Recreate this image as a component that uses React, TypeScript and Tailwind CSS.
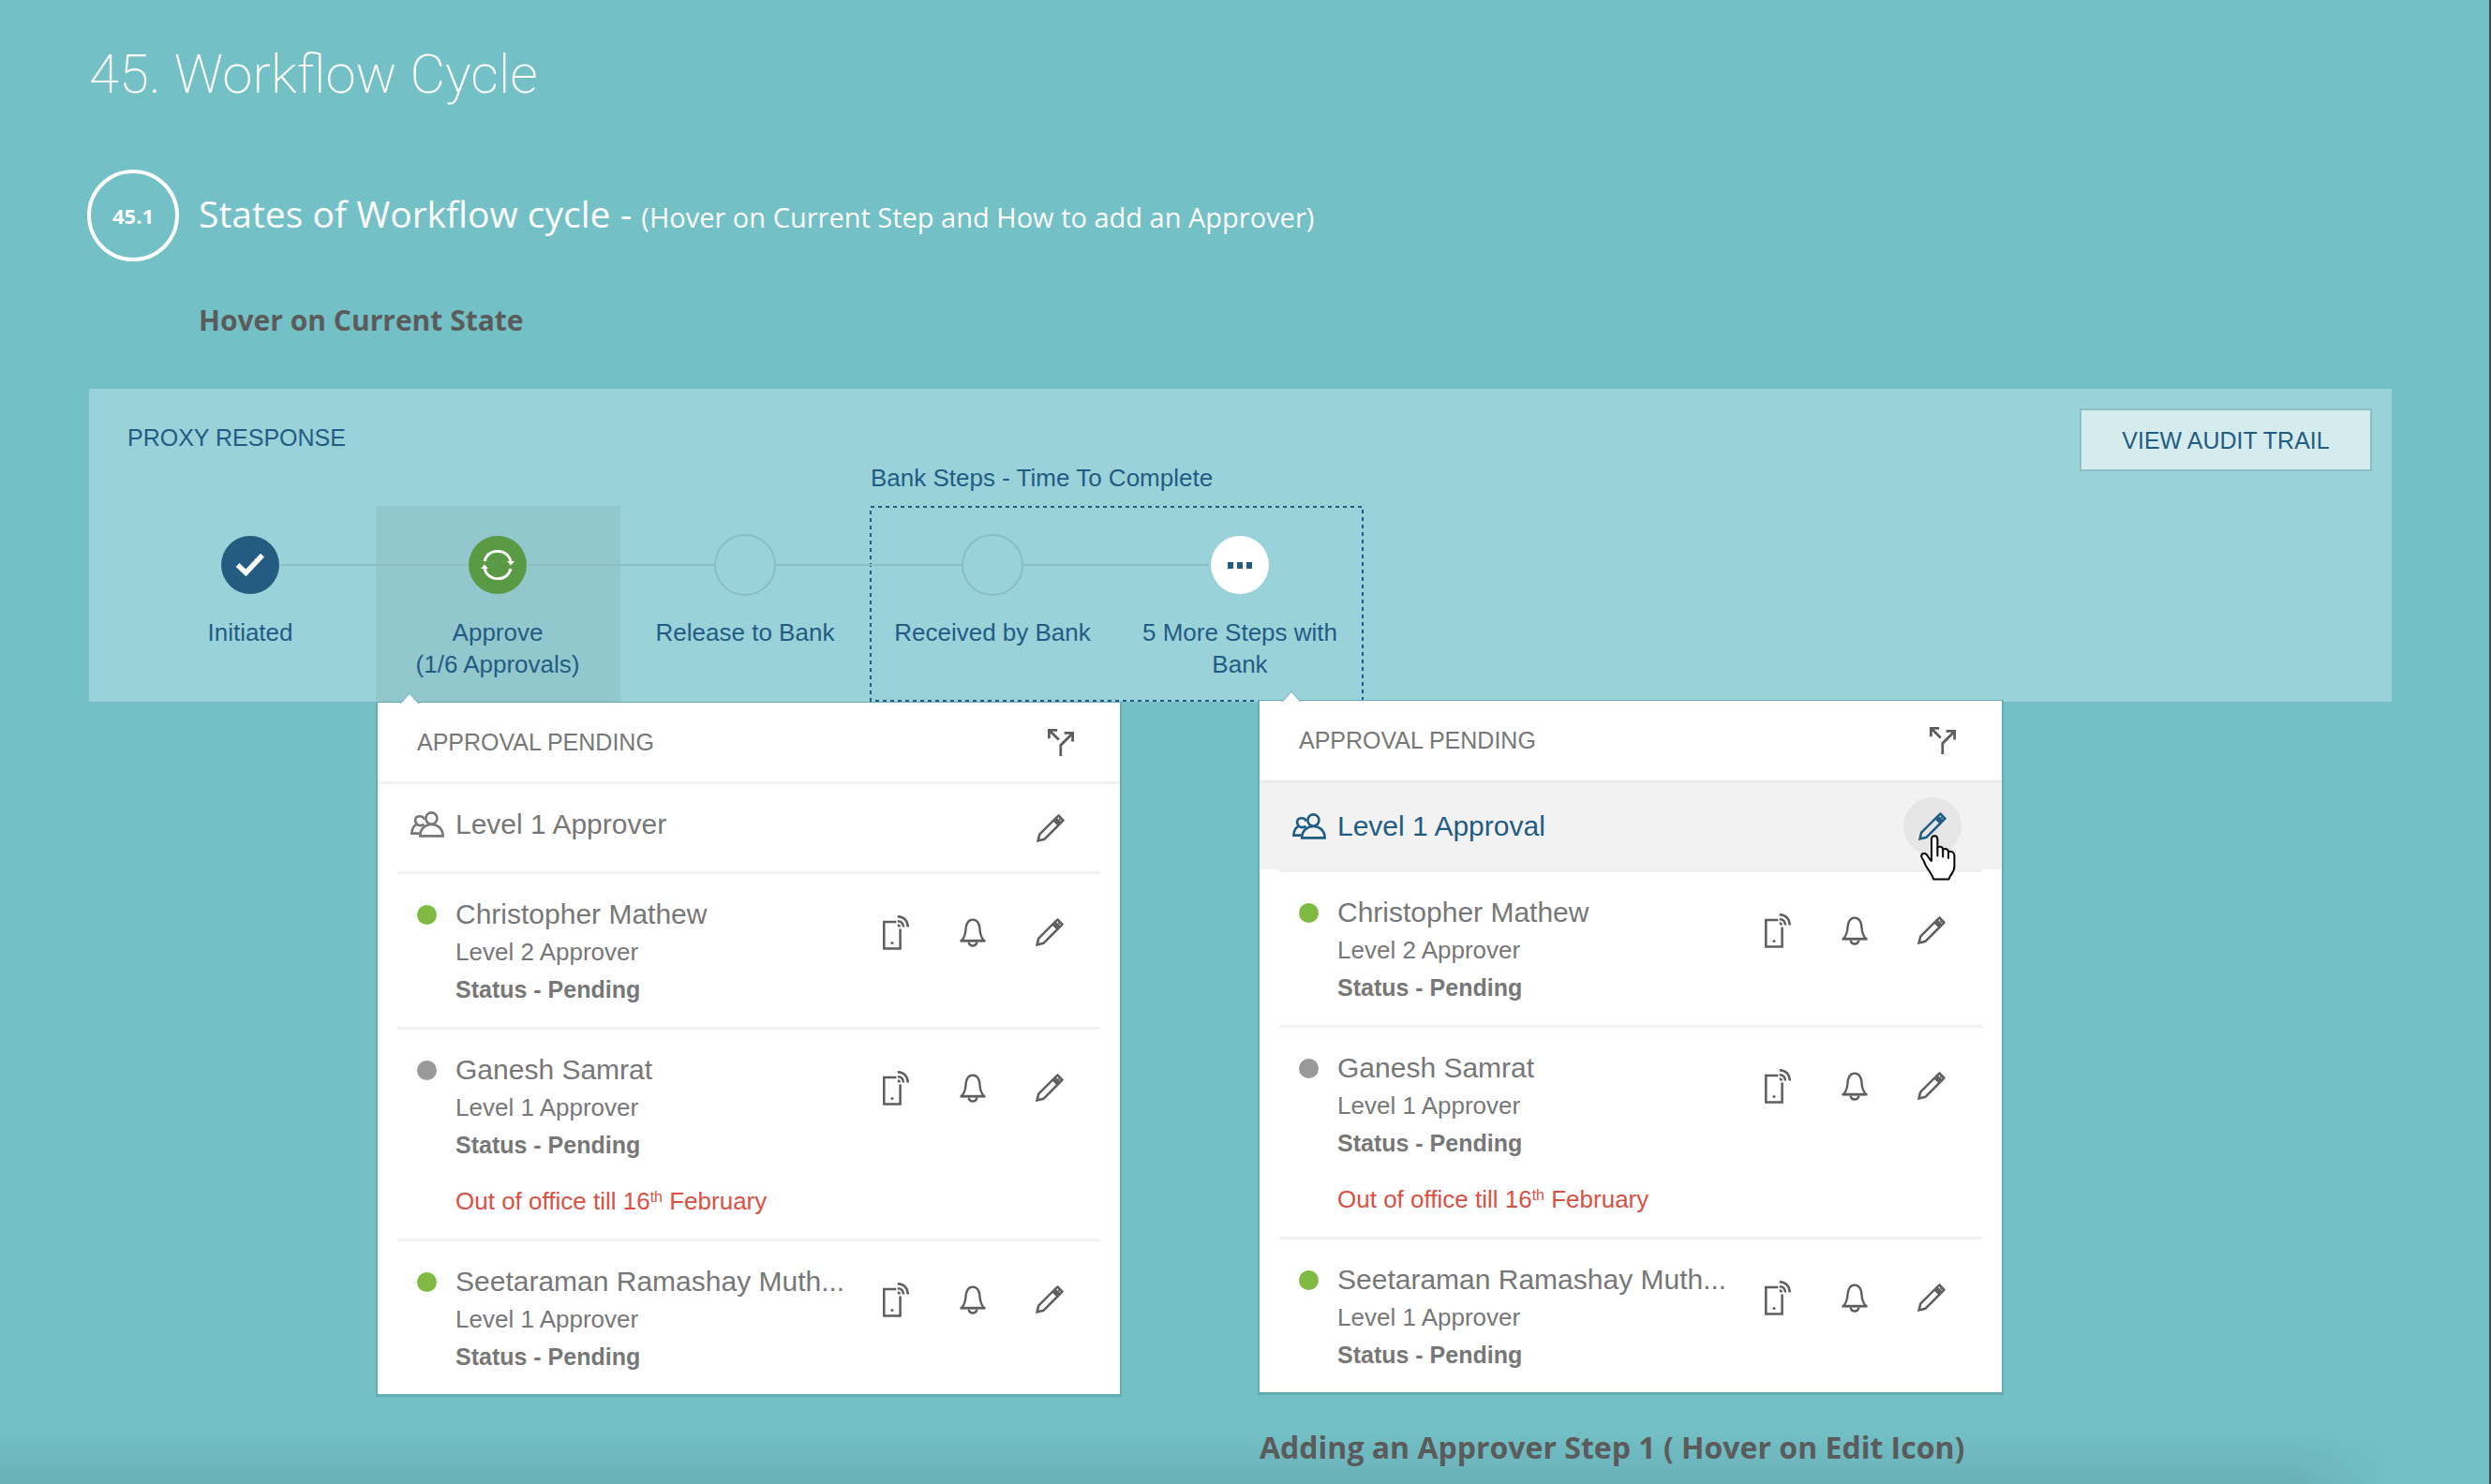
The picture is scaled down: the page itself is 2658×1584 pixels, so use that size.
import type { ReactNode } from "react";

type IconProps = { className?: string };

function PencilIcon({ className = "" }: IconProps) {
  return (
    <svg viewBox="0 0 30 30" className={`size-[30px] ${className}`} fill="none" stroke="currentColor" strokeWidth="2.5" aria-hidden="true">
      <path d="M1.6 28.4 3.2 21.6 18.6 6.2 23.8 11.4 8.4 26.8Z" />
      <path d="M20.4 4.4 23.6 1.6 28.4 6.6 25.6 9.6Z" />
      <path d="M24 4.6 25.6 6.8" strokeWidth="1.6" />
      <path d="M18.6 6.2 23.8 11.4" strokeWidth="3" />
    </svg>
  );
}

function BellIcon() {
  return (
    <svg viewBox="0 0 28 31" className="h-[31px] w-7" fill="none" stroke="currentColor" strokeWidth="2.4" aria-hidden="true">
      <path d="M.5 24.2h27" strokeWidth="2.8" />
      <path d="M2.2 24C5 20.6 6 18 6.4 13 6.8 6 8.6 1.6 14 1.6S21.2 6 21.6 13C22 18 23 20.6 25.8 24" />
      <path d="M9.6 25.5c.4 2.6 2.2 4 4.4 4s4-1.4 4.4-4" />
    </svg>
  );
}

function PhoneIcon() {
  return (
    <svg viewBox="0 0 28 37" className="h-[37px] w-7" fill="none" stroke="currentColor" strokeWidth="2.5" aria-hidden="true">
      <path d="M14.4 7H1.3v28.4H18.6V14.4" />
      <path d="M15.8 1.3C22.4 1.3 26.8 6 26.8 12.6" />
      <path d="M15.8 6.2C19.6 6.2 22 8.8 22 12.6" />
      <path d="M15.8 10.6c1.2 0 1.9.8 1.9 2" />
      <circle cx="10" cy="29.6" r="1.5" fill="currentColor" stroke="none" />
    </svg>
  );
}

function SplitIcon() {
  return (
    <svg viewBox="0 0 28 29" className="h-[29px] w-7" fill="none" stroke="currentColor" strokeWidth="2.8" aria-hidden="true">
      <path d="M13.8 29V17.4L26 5.2" />
      <path d="M17.6 4.4H26.6V13.6" />
      <path d="M1.4 10.2V1.4H10.2M1.6 1.6 11.8 11.6" />
    </svg>
  );
}

function PeopleIcon() {
  return (
    <svg viewBox="0 0 36 28" className="h-7 w-9" fill="none" stroke="currentColor" strokeWidth="2.6" aria-hidden="true">
      <ellipse cx="22.4" cy="7.6" rx="6" ry="6.2" />
      <path d="M10.2 26.4C10.2 18.6 15.8 14 22.4 14S34.6 18.6 34.6 26.4Z" />
      <path d="M14.4 13.8C12.4 15.6 8.2 15.6 6.6 13.4 3.6 9.6 5.2 5.2 9.6 5.2c2.6 0 4.6 1.4 5.2 3.4" />
      <path d="M6.4 13.8C3 16 1.4 19.2 1.4 23.6H9.6" />
    </svg>
  );
}

function HandCursor({ className = "" }: IconProps) {
  return (
    <svg viewBox="0 0 38 49" className={`h-[49px] w-[38px] ${className}`} fill="#fff" stroke="#000" strokeWidth="2" strokeLinejoin="round" strokeLinecap="round" aria-hidden="true">
      <path d="M12 28V5c0-5 6.4-5 6.4 0v8.400c2.400-1.600 5.600-.4 5.800 2.200 2.400-1.400 5.400-.2 5.800 2.400 3-1 6.400.6 6.400 4.200V34c0 6-4.400 8.600-6 13.600H14.200C12.400 41 6.200 35.400 4.600 30 3.600 26.400 1 25 1.200 22.600c.3-3 4.200-3.400 6-1C8.800 24 10 26.600 12 28Z" />
      <path d="M18.400 13.400v9M24.200 15.600v8M30 18v7" fill="none" />
    </svg>
  );
}

function Step({ label, line, current, children }: { label: ReactNode; line?: "start" | "middle" | "end"; current?: boolean; children: ReactNode }) {
  return (
    <li className={`relative flex h-[209px] w-[264px] flex-col items-center pt-[29px] text-center ${current ? "before:absolute before:inset-y-0 before:right-px before:left-0.5 before:bg-black/5" : ""}`}>
      {line !== "start" && <span className="absolute top-[62px] left-0 h-0.5 w-[99px] bg-[#8bbdc2]" />}
      {line !== "end" && <span className="absolute top-[62px] right-0 h-0.5 w-[99px] bg-[#8bbdc2]" />}
      <span className="relative flex size-[68px] items-center justify-center">{children}</span>
      <span className="relative mt-[21px] px-5 text-[26px] leading-[34px]">{label}</span>
    </li>
  );
}

const emptyMark = <span className="size-[66px] rounded-full border-2 border-[#8bbdc2]" />;

type Approver = { name: string; level: string; online: boolean; outOfOffice?: boolean };

const approvers: Approver[] = [
  { name: "Christopher Mathew", level: "Level 2 Approver", online: true },
  { name: "Ganesh Samrat", level: "Level 1 Approver", online: false, outOfOffice: true },
  { name: "Seetaraman Ramashay Muth...", level: "Level 1 Approver", online: true },
];

function IconButton({ label, children }: { label: string; children: ReactNode }) {
  return (
    <button type="button" aria-label={label} className="flex size-10 items-center justify-center">
      {children}
    </button>
  );
}

function ApproverRow({ person }: { person: Approver }) {
  return (
    <li className="mx-[21px] flex items-start justify-between border-b-[3px] border-[#f2f2f2] pt-[23px] pr-[34px] pb-5 pl-[21px] last:border-b-0">
      <div className="text-[26px] leading-10">
        <p className="flex items-center gap-5 text-[30px]">
          <span className={`size-[21px] rounded-full ${person.online ? "bg-[#7fba42]" : "bg-[#999]"}`} />
          {person.name}
        </p>
        <div className="pl-[41px]">
          <p>{person.level}</p>
          <p className="text-[25px] font-bold">Status - Pending</p>
          {person.outOfOffice && (
            <p className="mt-5 text-[#dd4f43]">
              Out of office till 16<sup className="text-[16px]">th</sup> February
            </p>
          )}
        </div>
      </div>
      <div className="flex gap-[42px] pt-[19px] text-[#5e5e5e]">
        <IconButton label="Send to mobile"><PhoneIcon /></IconButton>
        <IconButton label="Notify"><BellIcon /></IconButton>
        <IconButton label="Edit"><PencilIcon /></IconButton>
      </div>
    </li>
  );
}

function ApprovalCard({ title, hovered }: { title: string; hovered?: boolean }) {
  return (
    <section className="relative w-[792px] bg-white text-[#777] shadow-[0_1px_0_2px_#64acb3]">
      <svg viewBox="0 0 22 12" className="absolute -top-[11px] left-[23px] h-3 w-[22px]" aria-hidden="true">
        <path d="M0 12 11 0 22 12Z" fill="#84bec4" />
        <path d="M2 12 11 2 20 12Z" fill="#fff" />
      </svg>
      <header className="flex h-[87px] items-center justify-between border-b-[3px] border-[#f2f2f2] pr-[43px] pl-[42px]">
        <h3 className="text-[25px] leading-10">APPROVAL PENDING</h3>
        <button type="button" aria-label="Split approval" className="flex size-10 items-center justify-center text-[#5e5e5e]">
          <SplitIcon />
        </button>
      </header>
      {hovered ? (
        <div className="relative -mt-px flex h-[94px] items-center justify-between border-t border-[#e6e6e6] bg-[#f2f2f2] pr-[43px] pl-[35px] text-[#1f5c84]">
          <p className="flex items-center gap-3 text-[30px] leading-10"><PeopleIcon />{title}</p>
          <button type="button" aria-label="Edit level" className="relative flex size-[62px] items-center justify-center rounded-full bg-[#e6e6e6]">
            <PencilIcon />
            <HandCursor className="absolute top-10 left-[18px] z-10" />
          </button>
        </div>
      ) : (
        <div className="flex h-[93px] items-center justify-between pr-[43px] pl-[35px]">
          <p className="flex items-center gap-3 pb-2 text-[30px] leading-10"><PeopleIcon />{title}</p>
          <button type="button" aria-label="Edit level" className="flex size-[62px] items-center justify-center text-[#5e5e5e]">
            <PencilIcon />
          </button>
        </div>
      )}
      <div className="mx-[21px] h-[3px] bg-[#f0f0f0]" />
      <ul>
        {approvers.map((p) => <ApproverRow key={p.name} person={p} />)}
      </ul>
    </section>
  );
}

export default function App() {
  return (
    <main className="relative min-h-screen overflow-hidden border-r-2 border-[#3f4a4d] bg-[#73c0c7] pr-[104px] pl-[95px] font-['Liberation_Sans',Arial,sans-serif]">
      <h1 className="pt-[39px] font-['Roboto',sans-serif] text-[58px] leading-20 font-extralight text-white">45. Workflow Cycle</h1>

      <div className="-ml-0.5 mt-[62px] flex items-center gap-[21px] font-['Open_Sans',sans-serif] text-white">
        <span className="flex size-[98px] items-center justify-center rounded-full border-4 border-white text-[22px] font-bold">45.1</span>
        <h2 className="text-[39px] leading-[60px] font-normal">
          States of Workflow cycle - <span className="text-[29px]">(Hover on Current Step and How to add an Approver)</span>
        </h2>
      </div>

      <p className="mt-[42px] pl-[117px] font-['Open_Sans',sans-serif] text-[30px] leading-[42px] font-bold text-[#5b5b5b]">Hover on Current State</p>

      <section className="relative mt-[52px] bg-[#9ad2da] pl-10 text-[#225c82]">
        <div className="flex h-[125px] items-start justify-between pt-[21px] pr-[21px]">
          <h3 className="pt-[11px] pl-px text-[25px] leading-10">PROXY RESPONSE</h3>
          <button type="button" className="h-[67px] w-[312px] border-2 border-[#8cbfc4] bg-[#d5ecee] pt-0.5 text-[25px]">VIEW AUDIT TRAIL</button>
        </div>
        <ol className="flex">
          <Step line="start" label="Initiated">
            <span className="flex size-[62px] items-center justify-center rounded-full bg-[#245c81]">
              <svg viewBox="0 0 32 26" className="h-[26px] w-8" fill="none" stroke="#fff" strokeWidth="5.500" aria-hidden="true"><path d="M2.600 13 11.400 21.400 29 2.600" /></svg>
            </span>
          </Step>
          <Step current label={<>Approve<br />(1/6 Approvals)</>}>
            <span className="flex size-[62px] items-center justify-center rounded-full bg-[#5a9a45]">
              <svg viewBox="0 0 36 34" className="h-[34px] w-9" fill="none" stroke="#fff" strokeWidth="2.800" aria-hidden="true">
                <path d="M4 13C6 6 11.500 2.400 18 2.400S31 6.500 32 14" />
                <path d="M32 21C30 28 24.500 31.600 18 31.600S5 27.500 4 20" />
                <path d="M28 13h8l-4 4.500ZM0 21h8l-4-4.500Z" fill="#fff" stroke="none" />
              </svg>
            </span>
          </Step>
          <Step label="Release to Bank">{emptyMark}</Step>
          <li className="relative">
            <p className="absolute -top-[49px] left-0.5 text-[26px] leading-[38px] whitespace-nowrap">Bank Steps - Time To Complete</p>
            <svg className="absolute inset-y-0 left-px h-full w-[527px]" fill="none" stroke="#225c82" strokeWidth="2" strokeDasharray="4 4" aria-hidden="true">
              <rect x="1" y="1" width="525" height="207" />
            </svg>
            <ol className="flex">
              <Step label="Received by Bank">{emptyMark}</Step>
              <Step line="end" label={<>5 More Steps with<br />Bank</>}>
                <button type="button" aria-label="Show more steps" className="flex size-[62px] items-center justify-center gap-1 rounded-full bg-white">
                  <span className="h-[7px] w-1.5 bg-[#245c81]" />
                  <span className="h-[7px] w-1.5 bg-[#245c81]" />
                  <span className="h-[7px] w-1.5 bg-[#245c81]" />
                </button>
              </Step>
            </ol>
          </li>
        </ol>
      </section>

      <div className="relative flex items-start gap-[149px] pl-[308px]">
        <div className="pt-px"><ApprovalCard title="Level 1 Approver" /></div>
        <div className="-mt-px">
          <ApprovalCard title="Level 1 Approval" hovered />
          <p className="relative z-10 mt-[38px] font-['Open_Sans',sans-serif] text-[32px] leading-[42px] font-bold text-[#5b5b5b]">Adding an Approver Step 1 ( Hover on Edit Icon)</p>
        </div>
      </div>

      <div className="absolute bottom-0 left-0 h-14 w-[96%] bg-linear-to-b from-transparent to-black/8 mask-r-from-96%" />
    </main>
  );
}
